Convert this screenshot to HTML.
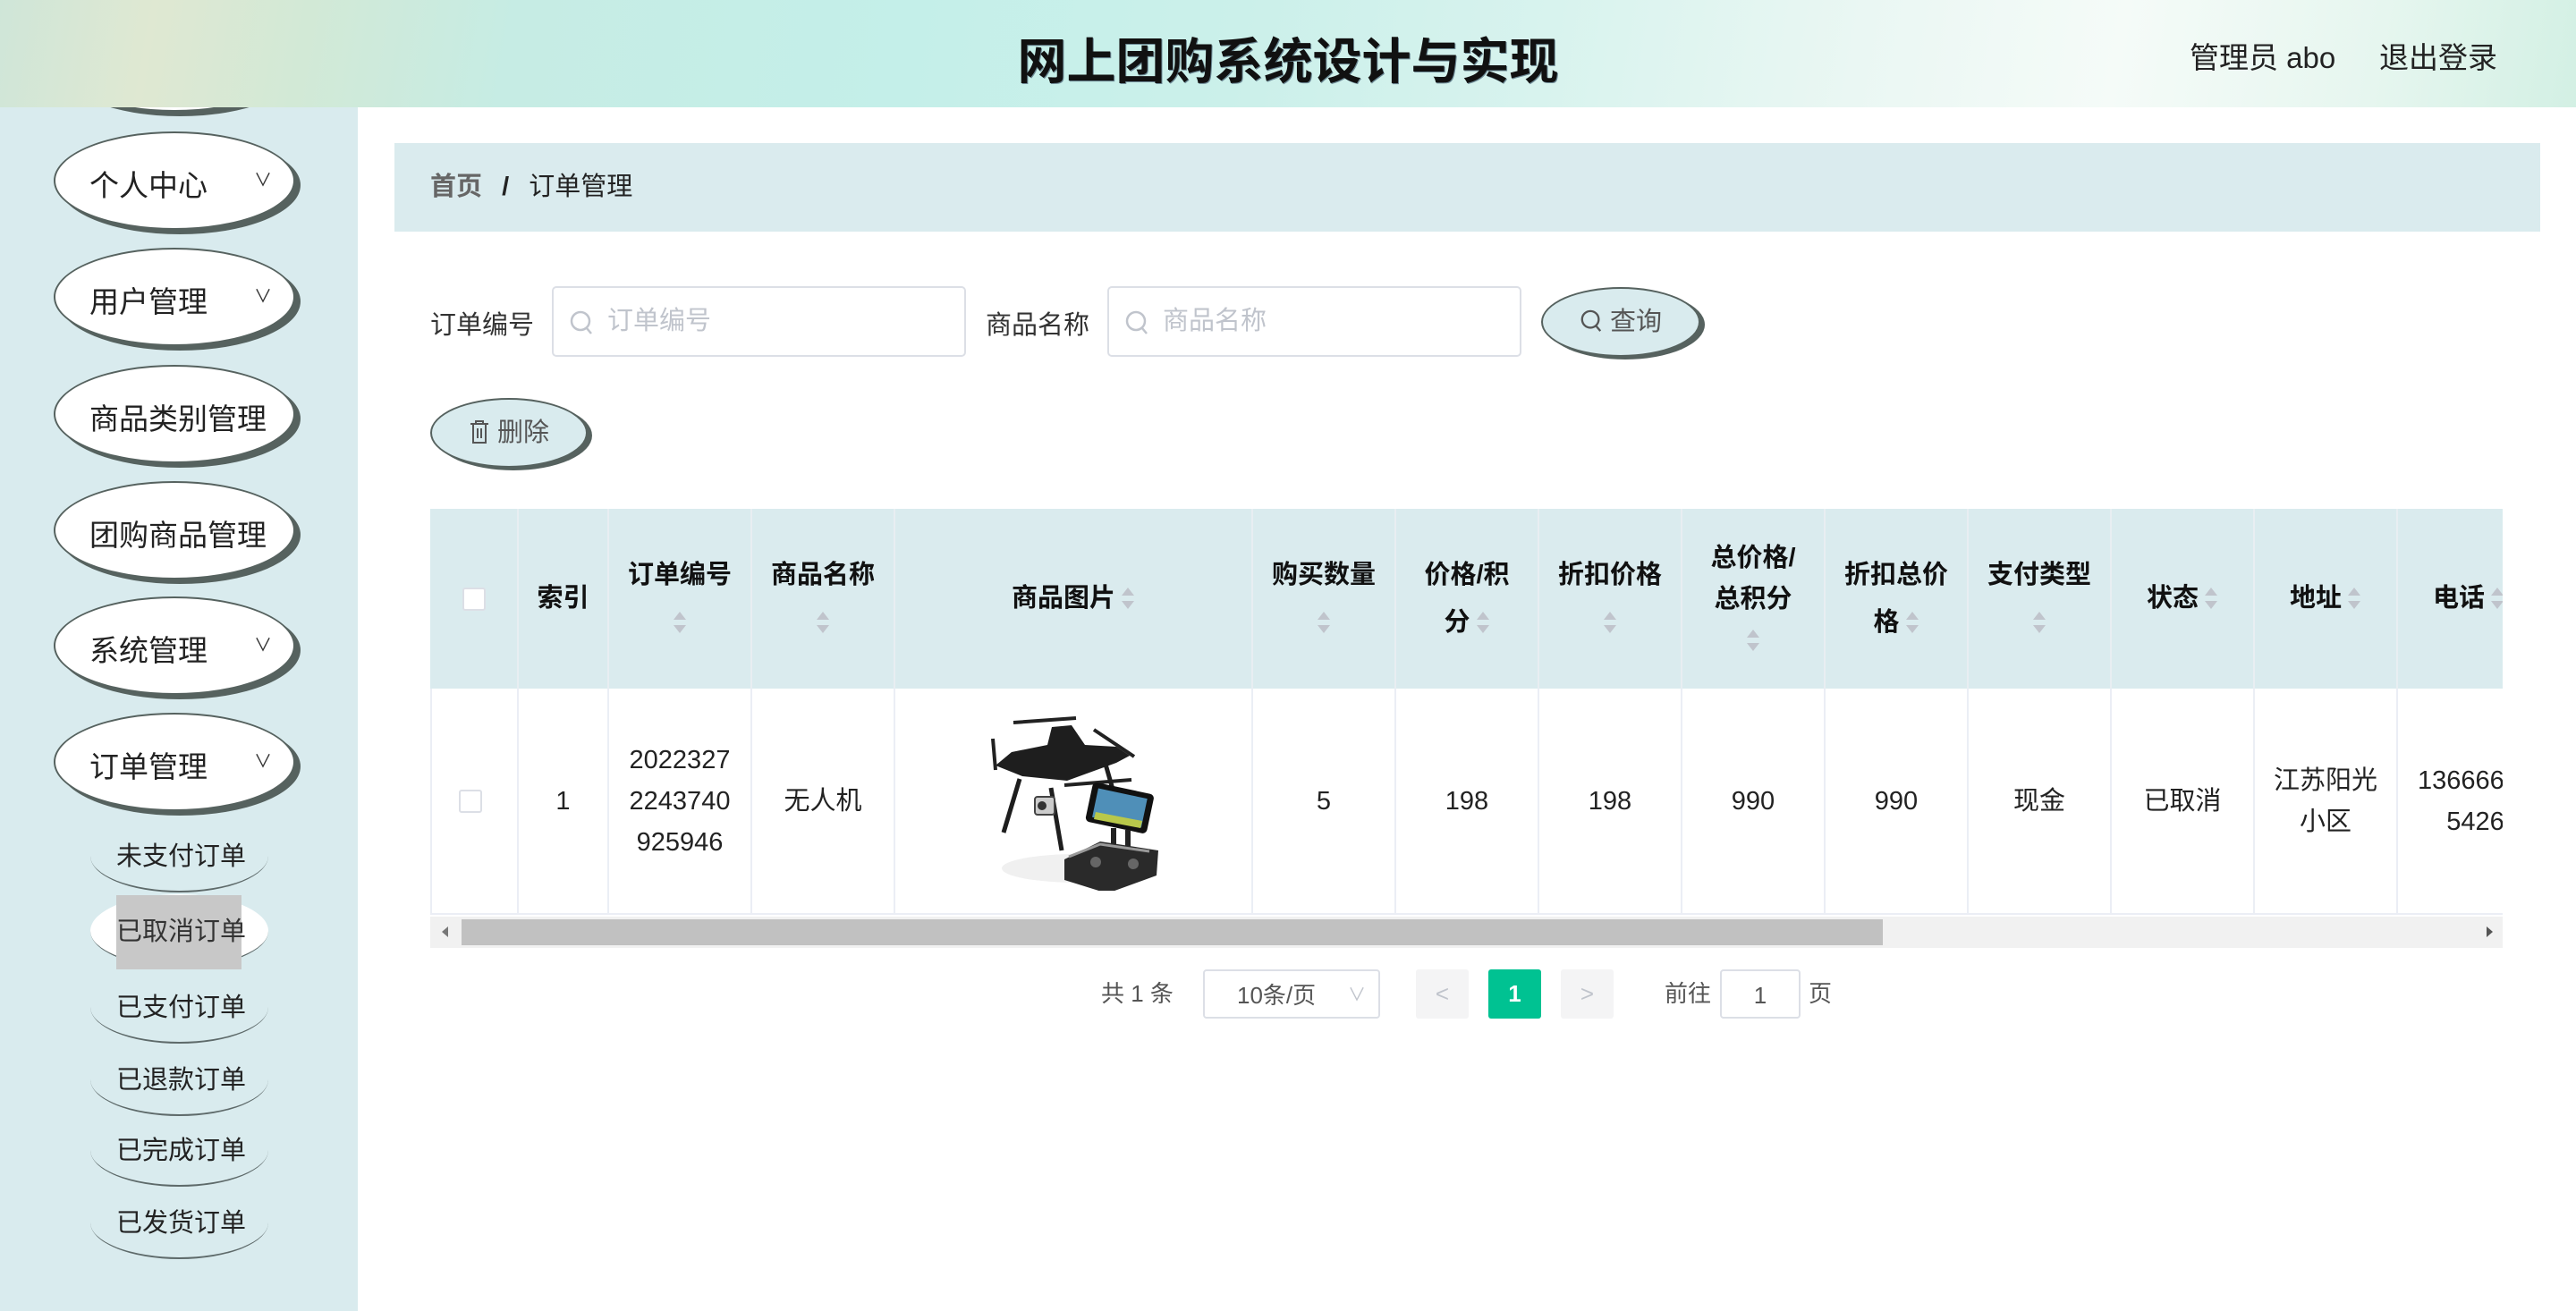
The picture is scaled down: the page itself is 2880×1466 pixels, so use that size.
<!DOCTYPE html>
<html><head><meta charset="utf-8">
<style>
*{margin:0;padding:0;box-sizing:border-box}
body{width:2880px;height:1466px;position:relative;overflow:hidden;background:#fff;font-family:"Liberation Sans","Noto Sans CJK SC",sans-serif;color:#333}
.abs{position:absolute}
.hr{top:38px;font-size:33px;color:#222}
#side{left:0;top:120px;width:400px;height:1346px;background:#d9ebee}
.mi{left:60px;width:270px;height:110px;border-radius:50%;background:#fff;border:2px solid #56625f;box-shadow:6px 5px 0 #56625f;font-size:33px;color:#222}
.mi span{position:absolute;left:38px;top:32px;white-space:nowrap}
.mi i{position:absolute;left:222px;top:36px;font-style:normal;font-size:20px;color:#333}
.si{left:101px;width:199px;height:82px;border-radius:50%;border-bottom:2px solid #5e6a6a;font-size:29px;color:#222}
.si span{position:absolute;left:29px;top:18px;white-space:nowrap}
#bc{left:441px;top:160px;width:2399px;height:99px;background:#daebee;font-size:29px;line-height:99px;padding-left:40px}
.lbl{font-size:29px;color:#333;top:340px}
.inp{top:320px;height:79px;border:2px solid #dcdfe6;border-radius:5px;width:463px;font-size:29px;color:#c0c4cc;line-height:75px;padding-left:60px}
.btn{border-radius:50%;background:#d9ebee;border:2px solid #56625f;box-shadow:5px 3px 0 #56625f;font-size:29px;color:#555;text-align:center}
.th{top:569px;height:201px;background:#daebee;border-right:2px solid #e8eef2;display:flex;align-items:center;justify-content:center;text-align:center;font-weight:bold;font-size:29px;line-height:53px;color:#111}
.td{top:770px;height:253px;border-right:2px solid #ebeef5;border-bottom:2px solid #ebeef5;display:flex;align-items:center;justify-content:center;text-align:center;font-size:29px;line-height:46px;color:#222}
.so{display:inline-block;width:16px;height:30px;position:relative;vertical-align:middle;margin-left:6px}
.so:before{content:"";position:absolute;left:1px;top:2px;border:7px solid transparent;border-bottom:9px solid #c0c4cc;border-top:0}
.so:after{content:"";position:absolute;left:1px;top:17px;border:7px solid transparent;border-top:9px solid #c0c4cc;border-bottom:0}
.cb{width:26px;height:26px;border:2px solid #dcdfe6;border-radius:3px;background:#fff}
.pg{top:1084px;height:55px;font-size:26px;color:#555;line-height:55px}
</style></head><body>

<div id="side" class="abs"></div>
<div class="abs mi" style="top:15px;"></div>
<div class="abs mi" style="top:147px"><span>个人中心</span><i>∨</i></div>
<div class="abs mi" style="top:277px"><span>用户管理</span><i>∨</i></div>
<div class="abs mi" style="top:408px"><span>商品类别管理</span></div>
<div class="abs mi" style="top:538px"><span>团购商品管理</span></div>
<div class="abs mi" style="top:667px"><span>系统管理</span><i>∨</i></div>
<div class="abs mi" style="top:797px"><span>订单管理</span><i>∨</i></div>
<div class="abs" style="left:0;top:0;width:2880px;height:120px;background:linear-gradient(100deg,#cfe6d8 0%,#dfe8d2 6%,#d2e9d6 12%,#c6ece4 20%,#c4efe9 35%,#cbf0ea 48%,#d8f3ee 60%,#eaf7f3 72%,#f5fbf8 82%,#e6f6ef 92%,#d3f0e4 100%)"></div>
<div class="abs" style="left:0;top:24px;width:2880px;text-align:center;font-size:55px;font-weight:bold;color:#111;text-shadow:1px 1px 0 #6d8a96">网上团购系统设计与实现</div>
<div class="abs hr" style="left:2448px">管理员 abo</div>
<div class="abs hr" style="left:2660px">退出登录</div>

<div class="abs si" style="top:916px"><span>未支付订单</span></div>
<div class="abs si" style="top:1000px;background:#fff"></div>
<div class="abs" style="left:130px;top:1001px;width:140px;height:83px;background:#c8c8c8"></div>
<div class="abs" style="left:130px;top:1018px;font-size:29px;color:#333;white-space:nowrap">已取消订单</div>
<div class="abs si" style="top:1085px"><span>已支付订单</span></div>
<div class="abs si" style="top:1166px"><span>已退款订单</span></div>
<div class="abs si" style="top:1245px"><span>已完成订单</span></div>
<div class="abs si" style="top:1326px"><span>已发货订单</span></div>

<div id="bc" class="abs"><b style="color:#666">首页</b> <b style="margin:0 14px;color:#222">/</b> <span style="color:#222">订单管理</span></div>

<div class="abs lbl" style="left:481px">订单编号</div>
<div class="abs inp" style="left:617px">订单编号</div>
<div class="abs lbl" style="left:1102px">商品名称</div>
<div class="abs inp" style="left:1238px">商品名称</div>
<svg class="abs" style="left:636px;top:346px" width="28" height="30" viewBox="0 0 28 30"><circle cx="13" cy="13" r="10" fill="none" stroke="#c0c4cc" stroke-width="2.5"/><path d="M20 21l5 6" stroke="#c0c4cc" stroke-width="2.5"/></svg>
<svg class="abs" style="left:1257px;top:346px" width="28" height="30" viewBox="0 0 28 30"><circle cx="13" cy="13" r="10" fill="none" stroke="#c0c4cc" stroke-width="2.5"/><path d="M20 21l5 6" stroke="#c0c4cc" stroke-width="2.5"/></svg>
<div class="abs btn" style="left:1723px;top:321px;width:178px;height:78px;line-height:74px">
<svg width="26" height="28" viewBox="0 0 28 30" style="vertical-align:-4px"><circle cx="13" cy="13" r="10" fill="none" stroke="#555" stroke-width="2.5"/><path d="M20 21l5 6" stroke="#555" stroke-width="2.5"/></svg> 查询</div>
<div class="abs btn" style="left:481px;top:445px;width:176px;height:78px;line-height:74px">
<svg width="24" height="28" viewBox="0 0 24 28" style="vertical-align:-4px"><path d="M2 5h20M8 5V2h8v3M5 5v21h14V5M10 10v11M14 10v11" fill="none" stroke="#555" stroke-width="2"/></svg> 删除</div>

<div class="abs" style="left:481px;top:569px;width:2317px;height:491px;overflow:hidden">
<div style="position:absolute;left:-481px;top:-569px;width:3000px;height:1100px">
<div class="abs th" style="left:481px;width:99px"><div class="cb"></div></div>
<div class="abs th" style="left:580px;width:101px"><div>索引</div></div>
<div class="abs th" style="left:681px;width:160px"><div>订单编号<br><span class="so" style="margin:0"></span></div></div>
<div class="abs th" style="left:841px;width:160px"><div>商品名称<br><span class="so" style="margin:0"></span></div></div>
<div class="abs th" style="left:1001px;width:400px"><div>商品图片<span class="so"></span></div></div>
<div class="abs th" style="left:1401px;width:160px"><div>购买数量<br><span class="so" style="margin:0"></span></div></div>
<div class="abs th" style="left:1561px;width:160px"><div>价格/积<br>分<span class="so"></span></div></div>
<div class="abs th" style="left:1721px;width:160px"><div>折扣价格<br><span class="so" style="margin:0"></span></div></div>
<div class="abs th" style="left:1881px;width:160px;line-height:46px"><div>总价格/<br>总积分<br><span class="so" style="margin:0"></span></div></div>
<div class="abs th" style="left:2041px;width:160px"><div>折扣总价<br>格<span class="so"></span></div></div>
<div class="abs th" style="left:2201px;width:160px"><div>支付类型<br><span class="so" style="margin:0"></span></div></div>
<div class="abs th" style="left:2361px;width:160px"><div>状态<span class="so"></span></div></div>
<div class="abs th" style="left:2521px;width:160px"><div>地址<span class="so"></span></div></div>
<div class="abs th" style="left:2681px;width:160px"><div>电话<span class="so"></span></div></div>

<div class="abs td" style="left:481px;width:99px;border-left:2px solid #ebeef5"><div class="cb" style="margin-left:-10px"></div></div>
<div class="abs td" style="left:580px;width:101px">1</div>
<div class="abs td" style="left:681px;width:160px">2022327<br>2243740<br>925946</div>
<div class="abs td" style="left:841px;width:160px">无人机</div>
<div class="abs td" style="left:1001px;width:400px">
<svg width="210" height="200" viewBox="0 0 210 200">
<ellipse cx="110" cy="175" rx="85" ry="16" fill="#f0f0f0"/>
<path d="M38 12l70 -5M95 82l75 -6M128 20l45 30M15 30l3 35" stroke="#222" stroke-width="4"/>
<path d="M18 60l30 12l50 5l55 -20l15 -8l-15 -10l-35 -2l-15 -22l-22 2l-5 20l-40 8z" fill="#1e1e1e"/>
<path d="M45 75l-18 60M80 85l12 70M140 55l10 35" stroke="#1e1e1e" stroke-width="5"/>
<rect x="62" y="95" width="22" height="20" rx="3" fill="#ccc" stroke="#444" stroke-width="2"/>
<circle cx="70" cy="105" r="5" fill="#333"/>
<rect x="122" y="85" width="70" height="45" rx="5" fill="#111" transform="rotate(12 157 107)"/>
<rect x="129" y="91" width="56" height="33" fill="#4f8fb8" transform="rotate(12 157 107)"/>
<path d="M130 112l52 10l-2 8l-52 -10z" fill="#b8c84a"/>
<path d="M150 130v22M166 132v22" stroke="#222" stroke-width="6"/>
<path d="M95 165l40 -20l65 10l-2 28l-55 20l-48 -15z" fill="#2a2a2a"/>
<path d="M100 162l35 -14l55 8" fill="none" stroke="#999" stroke-width="3"/>
<circle cx="130" cy="168" r="6" fill="#666"/><circle cx="172" cy="170" r="6" fill="#666"/>
</svg></div>
<div class="abs td" style="left:1401px;width:160px">5</div>
<div class="abs td" style="left:1561px;width:160px">198</div>
<div class="abs td" style="left:1721px;width:160px">198</div>
<div class="abs td" style="left:1881px;width:160px">990</div>
<div class="abs td" style="left:2041px;width:160px">990</div>
<div class="abs td" style="left:2201px;width:160px">现金</div>
<div class="abs td" style="left:2361px;width:160px">已取消</div>
<div class="abs td" style="left:2521px;width:160px">江苏阳光<br>小区</div>
<div class="abs td" style="left:2681px;width:160px;justify-content:flex-start;padding-left:22px;text-align:right">136666<br>&nbsp;&nbsp;&nbsp;5426</div>
</div></div>
<div class="abs" style="left:481px;top:1025px;width:2317px;height:35px;background:#f1f1f1"></div>
<div class="abs" style="left:516px;top:1028px;width:1589px;height:29px;background:#c1c1c1"></div>
<div class="abs" style="left:494px;top:1036px;border:6px solid transparent;border-right:7px solid #777;border-left:0"></div>
<div class="abs" style="left:2780px;top:1036px;border:6px solid transparent;border-left:7px solid #555;border-right:0"></div>

<div class="abs pg" style="left:1231px">共 1 条</div>
<div class="abs pg" style="left:1345px;width:198px;border:2px solid #dcdfe6;border-radius:4px;padding-left:36px;color:#555">10条/页<span style="position:absolute;right:14px;color:#c0c4cc;font-size:20px">∨</span></div>
<div class="abs pg" style="left:1583px;width:59px;background:#f4f4f5;border-radius:3px;text-align:center;color:#c0c4cc">&lt;</div>
<div class="abs pg" style="left:1664px;width:59px;background:#00c292;border-radius:3px;text-align:center;color:#fff;font-weight:bold">1</div>
<div class="abs pg" style="left:1745px;width:59px;background:#f4f4f5;border-radius:3px;text-align:center;color:#c0c4cc">&gt;</div>
<div class="abs pg" style="left:1861px">前往</div>
<div class="abs pg" style="left:1923px;width:90px;border:2px solid #dcdfe6;border-radius:4px;text-align:center">1</div>
<div class="abs pg" style="left:2022px">页</div>
</body></html>
